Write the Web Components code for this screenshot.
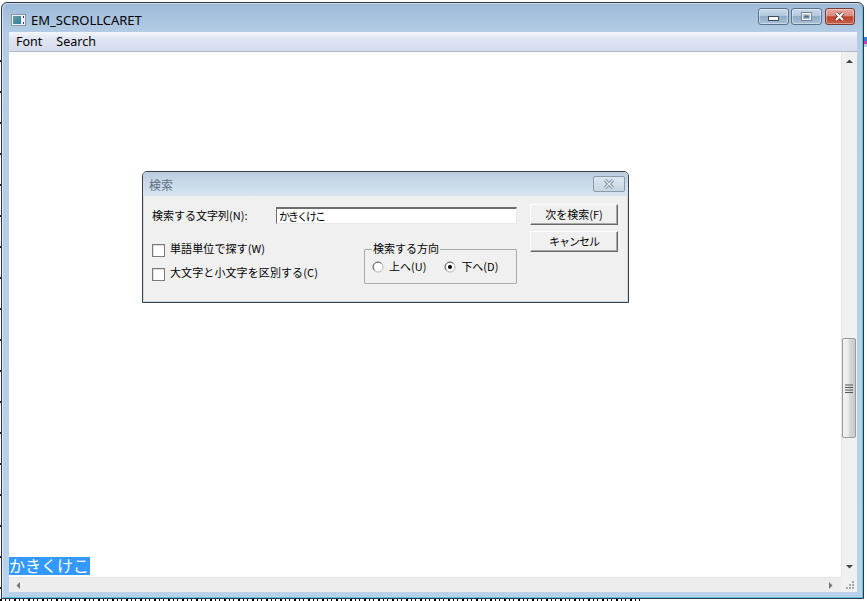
<!DOCTYPE html>
<html lang="ja"><head><meta charset="utf-8"><title>EM_SCROLLCARET</title>
<style>
html,body{margin:0;padding:0;width:867px;height:601px;overflow:hidden;background:#fff}
body{font:12px "Noto Sans","Noto Sans CJK JP",sans-serif;color:#000;position:relative}
</style></head><body>
<template id="t-desktop"><style>
:host{position:absolute;inset:0;display:block;background:#fff;overflow:hidden}
.b{position:absolute;left:0;bottom:0;width:640px;height:2px;background:repeating-linear-gradient(90deg,#000 0 2px,#fff 2px 5px,#000 5px 6px,#fff 6px 9px,#000 9px 10px,#fff 10px 14px)}
.l{position:absolute;left:0;top:60px;width:1px;height:540px;background:repeating-linear-gradient(180deg,#222 0 2px,#fff 2px 31px)}
.r{position:absolute;right:0;top:37px;width:3px;height:10px;background:linear-gradient(180deg,#3a7fd0 0 4px,#d040b0 4px 7px,#c8c8d8 7px)}
</style><div class="l"></div><div class="r"></div><div class="b"></div></template>

<template id="t-window"><style>
:host{display:flex;flex-direction:column;position:absolute;left:1px;top:2px;width:863px;height:597px;box-sizing:border-box;border:1px solid #2c3a48;border-radius:6px 6px 0 0;background:linear-gradient(180deg,#9dbad9 0,#b4cce5 30px,#b9d1ea 100%);padding:0 6px 6px 7px;box-shadow:inset 1px 1px 0 rgba(255,255,255,.5),inset -1px -1px 0 #5cc3e6}
.title{height:29px;display:flex;align-items:center;flex:none;justify-content:space-between;box-sizing:border-box;padding-top:1px}
.cap{display:flex;align-items:center;gap:5px;font:13px "Noto Sans",sans-serif;color:#000;padding-left:2px;padding-top:3px}
.btns{display:flex;gap:2px;padding-right:2px;padding-bottom:3px;align-items:center}
.client{flex:1;display:flex;flex-direction:column;min-height:0;background:#fff}
.content{flex:1;display:flex;min-height:0}
.main{flex:1;display:flex;flex-direction:column;justify-content:flex-end;position:relative;min-width:0}
.bottom{display:flex;flex:none;height:15px}
svg{display:block}
</style>
<div class="title"><div class="cap"><svg width="15" height="12" viewBox="0 0 15 12"><defs><linearGradient id="g" x1="0" y1="0" x2="1" y2="1"><stop offset="0" stop-color="#6f9f8f"/><stop offset="1" stop-color="#2a7fa8"/></linearGradient></defs><rect x=".5" y=".5" width="14" height="11" fill="#eef2f6" stroke="#8a97a5"/><rect x="2" y="2" width="8" height="8" fill="url(#g)"/><rect x="12" y="2" width="1" height="2" fill="#30404c"/><rect x="12" y="8" width="1" height="2" fill="#30404c"/></svg><span>EM_SCROLLCARET</span></div>
<div class="btns"><x-capbtn kind="min"></x-capbtn><x-capbtn kind="max"></x-capbtn><x-capbtn kind="close"></x-capbtn></div></div>
<div class="client"><slot name="menu"></slot><div class="content"><div class="main"><slot></slot></div><x-scroll dir="v"></x-scroll></div><div class="bottom"><x-scroll dir="h"></x-scroll><x-grip></x-grip></div></div>
</template>

<template id="t-capbtn"><style>
:host{display:flex;align-items:center;justify-content:center;width:31px;height:17px;box-sizing:border-box;border:1px solid #5c7188;border-radius:3px;background:linear-gradient(180deg,#c9d9ea 0,#b2c8de 45%,#8eabc7 50%,#a9c2da 100%);box-shadow:inset 0 0 0 1px rgba(255,255,255,.4)}
:host([kind=close]){width:30px;margin-left:1px;border-color:#7a3a34;background:linear-gradient(180deg,#e9a69c 0,#dc8c80 45%,#bd4128 52%,#c8604a 100%)}
svg{display:block}
</style><span id="i"></span></template>

<template id="t-menu"><style>
:host{display:flex;height:20px;box-sizing:border-box;align-items:center;gap:14px;padding:0 0 1px 7px;background:linear-gradient(180deg,#f5f7fb 0,#dfe5f2 35%,#d6dcec 100%);border-bottom:1px solid #b4b8c4;font:12.5px "Noto Sans",sans-serif;color:#000}
</style><slot></slot></template>

<template id="t-scroll"><style>
:host{display:flex;flex:none;background:#f0f0f0;color:#333;position:relative}
:host([dir=v]){flex-direction:column;width:16px;align-items:center;justify-content:space-between;border-left:1px solid #e6e6e6;box-sizing:border-box;padding-top:5px;padding-bottom:6px}
:host([dir=h]){flex:1;align-items:center;justify-content:space-between;border-top:1px solid #e4e4e4;padding:0 6px 0 5px;box-sizing:border-box;background:#ededed}
.thumb{position:absolute;right:1px;top:286px;width:14px;height:100px;box-sizing:border-box;border:1px solid #999;border-radius:2px;background:linear-gradient(90deg,#f2f2f2 0,#ebebeb 45%,#d9d9d9 50%,#c9c9c9 100%);display:flex;align-items:center;justify-content:center}
svg{display:block}
</style><svg id="a" width="9" height="9" viewBox="0 0 9 9"></svg><div class="thumb" id="th"><svg width="8" height="9" viewBox="0 0 8 9"><path d="M0 1h8M0 3.5h8M0 6h8M0 8.5h8" stroke="#555" stroke-width="1"/></svg></div><svg id="b" width="9" height="9" viewBox="0 0 9 9"></svg></template>

<template id="t-grip"><style>
:host{display:block;flex:none;width:16px;height:15px;background:#f0f0f0}
svg{display:block}
</style><svg width="16" height="15" viewBox="0 0 16 15" fill="#a9a9a9"><rect x="11" y="4" width="2" height="2"/><rect x="8" y="7" width="2" height="2"/><rect x="11" y="7" width="2" height="2"/><rect x="5" y="10" width="2" height="2"/><rect x="8" y="10" width="2" height="2"/><rect x="11" y="10" width="2" height="2"/></svg></template>

<template id="t-sel"><style>
:host{display:block;flex:none;width:81px;height:18px;margin-bottom:2px;background:#3399ff;color:#fff;font:16px/17px "Noto Sans CJK JP",sans-serif;white-space:nowrap}
</style><slot></slot></template>

<template id="t-dialog"><style>
:host{display:flex;flex-direction:column;position:absolute;left:133px;top:119px;width:487px;height:132px;box-sizing:border-box;border:1px solid #3a4148;border-radius:5px 5px 0 0;background:#f0f0f0;font:11px "Noto Sans CJK JP",sans-serif;color:#000}
.title{height:24px;flex:none;display:flex;align-items:center;justify-content:space-between;padding:0 3px 0 6px;box-sizing:border-box;border-radius:4px 4px 0 0;background:linear-gradient(180deg,#b9cbdd 0,#c8d8e8 40%,#d6e4f1 100%);color:#5f6f7f;font-size:12px}
.x{width:32px;height:16px;box-sizing:border-box;border:1px solid #8a9aab;border-radius:2px;background:linear-gradient(180deg,#dce6f0,#c8d6e4);display:flex;align-items:center;justify-content:center}
.body{flex:1;display:flex;padding-left:8px;border:solid #c9d9e8;border-width:0 1px 1px 1px;box-sizing:border-box}
.left{width:365px;margin-right:13px;display:flex;flex-direction:column}
.row1{display:flex;align-items:center;margin-top:11px;height:17px}
.row1 .lbl{width:124px;flex:none;padding-bottom:2px}
.edit{flex:1;height:17px;box-sizing:border-box;border:1px solid;border-color:#6d6d6d #e8e8e8 #e8e8e8 #6d6d6d;border-top-width:2px;background:#fff;line-height:14px;padding-left:2px;letter-spacing:-2px}
.row2{display:flex;margin-top:18px}
.checks{width:212px;flex:none;display:flex;flex-direction:column;gap:10px;padding-top:1px}
fieldset{margin:0;width:153px;height:42px;box-sizing:border-box;border:1px solid #a9a9a9;border-radius:1px;padding:0 0 0 7px}
legend{padding:0 1px;margin-left:0;line-height:12px;height:14px;box-sizing:border-box}
.radios{display:flex;gap:18px;padding-top:4px}
.right{display:flex;flex-direction:column;gap:6px;margin-top:8px}
svg{display:block}
</style>
<div class="title"><span>検索</span><div class="x"><svg width="14" height="10" viewBox="0 0 14 10"><path d="M3 1l8 8M11 1l-8 8" stroke="#7f8d9c" stroke-width="3.2" fill="none"/><path d="M3 1l8 8M11 1l-8 8" stroke="#e4eaf1" stroke-width="1.3" fill="none"/></svg></div></div>
<div class="body"><div class="left">
<div class="row1"><span class="lbl">検索する文字列(N):</span><div class="edit">かきくけこ</div></div>
<div class="row2"><div class="checks"><x-check>単語単位で探す(W)</x-check><x-check>大文字と小文字を区別する(C)</x-check></div>
<fieldset><legend>検索する方向</legend><div class="radios"><x-radio>上へ(U)</x-radio><x-radio checked>下へ(D)</x-radio></div></fieldset></div>
</div><div class="right"><x-btn>次を検索(F)</x-btn><x-btn style="letter-spacing:-1px">キャンセル</x-btn></div></div></template>

<template id="t-check"><style>
:host{display:flex;align-items:center;gap:5px;height:14px;white-space:nowrap}
.b{width:11px;height:11px;flex:none;border:1px solid #7a7a7a;background:#fff;box-shadow:inset 1px 1px 0 #ddd}
.t{padding-bottom:4px;letter-spacing:.1px}
</style><div class="b"></div><span class="t"><slot></slot></span></template>

<template id="t-radio"><style>
:host{display:flex;align-items:center;gap:5px;height:14px;white-space:nowrap}
svg{display:block;flex:none}
.t{padding-bottom:2px}
</style><svg width="12" height="12" viewBox="0 0 12 12"><circle cx="6" cy="6" r="5" fill="#fff" stroke="#b5b5b5"/><path d="M2.5 9.5A5 5 0 0 1 2.5 2.5A5 5 0 0 1 9.5 2.5" fill="none" stroke="#666"/><circle id="d" cx="6" cy="6" r="2" fill="#000"/></svg><span class="t"><slot></slot></span></template>

<template id="t-btn"><style>
:host{display:flex;align-items:center;justify-content:center;width:88px;height:21px;box-sizing:border-box;background:#f0f0f0;border:1px solid;border-color:#fff #666 #666 #fff;box-shadow:inset -1px -1px 0 #a9a9a9;white-space:nowrap;padding-bottom:2px}
</style><slot></slot></template>

<x-desktop></x-desktop>
<x-window>
  <x-menu slot="menu"><span>Font</span><span>Search</span></x-menu>
  <x-sel>かきくけこ</x-sel>
  <x-dialog></x-dialog>
</x-window>

<script>
function base(id,init){return class extends HTMLElement{constructor(){super();const s=this.attachShadow({mode:'open'});s.appendChild(document.getElementById(id).content.cloneNode(true));if(init)init.call(this,s)}}}
customElements.define('x-desktop',base('t-desktop'));
customElements.define('x-window',base('t-window'));
customElements.define('x-menu',base('t-menu'));
customElements.define('x-grip',base('t-grip'));
customElements.define('x-sel',base('t-sel'));
customElements.define('x-dialog',base('t-dialog'));
customElements.define('x-check',base('t-check'));
customElements.define('x-btn',base('t-btn'));
customElements.define('x-radio',class extends HTMLElement{constructor(){super();const s=this.attachShadow({mode:'open'});s.appendChild(document.getElementById('t-radio').content.cloneNode(true))}connectedCallback(){if(!this.hasAttribute('checked'))this.shadowRoot.getElementById('d').remove()}});
customElements.define('x-capbtn',class extends HTMLElement{constructor(){super();const s=this.attachShadow({mode:'open'});s.appendChild(document.getElementById('t-capbtn').content.cloneNode(true))}connectedCallback(){const k=this.getAttribute('kind');const m={min:'<svg width="12" height="6" viewBox="0 0 12 6" style="margin-top:5px"><rect x=".5" y=".5" width="10" height="4" fill="#fff" stroke="#3e4c5c"/></svg>',max:'<svg width="12" height="10" viewBox="0 0 12 10"><rect x="1" y="1" width="9" height="7" fill="none" stroke="#fff" stroke-width="2"/><rect x=".5" y=".5" width="10" height="8" fill="none" stroke="#3e4c5c" stroke-opacity=".7"/><rect x="3.5" y="3.5" width="4" height="2" fill="#55697e"/></svg>',close:'<svg width="12" height="10" viewBox="0 0 12 10"><path d="M2 1l7 7M9 1l-7 7" stroke="#5a2a24" stroke-width="3.6" fill="none"/><path d="M2 1l7 7M9 1l-7 7" stroke="#fff" stroke-width="2.2" fill="none"/></svg>'};this.shadowRoot.getElementById('i').innerHTML=m[k]}});
customElements.define('x-scroll',class extends HTMLElement{constructor(){super();const s=this.attachShadow({mode:'open'});s.appendChild(document.getElementById('t-scroll').content.cloneNode(true))}connectedCallback(){const s=this.shadowRoot,v=this.getAttribute('dir')==='v';s.getElementById('a').innerHTML=v?'<path d="M1 6h7L4.5 2.5z" fill="#444"/>':'<path d="M6 1v7L2.5 4.5z" fill="#777"/>';s.getElementById('b').innerHTML=v?'<path d="M1 3h7L4.5 6.5z" fill="#444"/>':'<path d="M3 1v7L6.5 4.5z" fill="#777"/>';if(!v)s.getElementById('th').remove()}});
</script>
</body></html>
